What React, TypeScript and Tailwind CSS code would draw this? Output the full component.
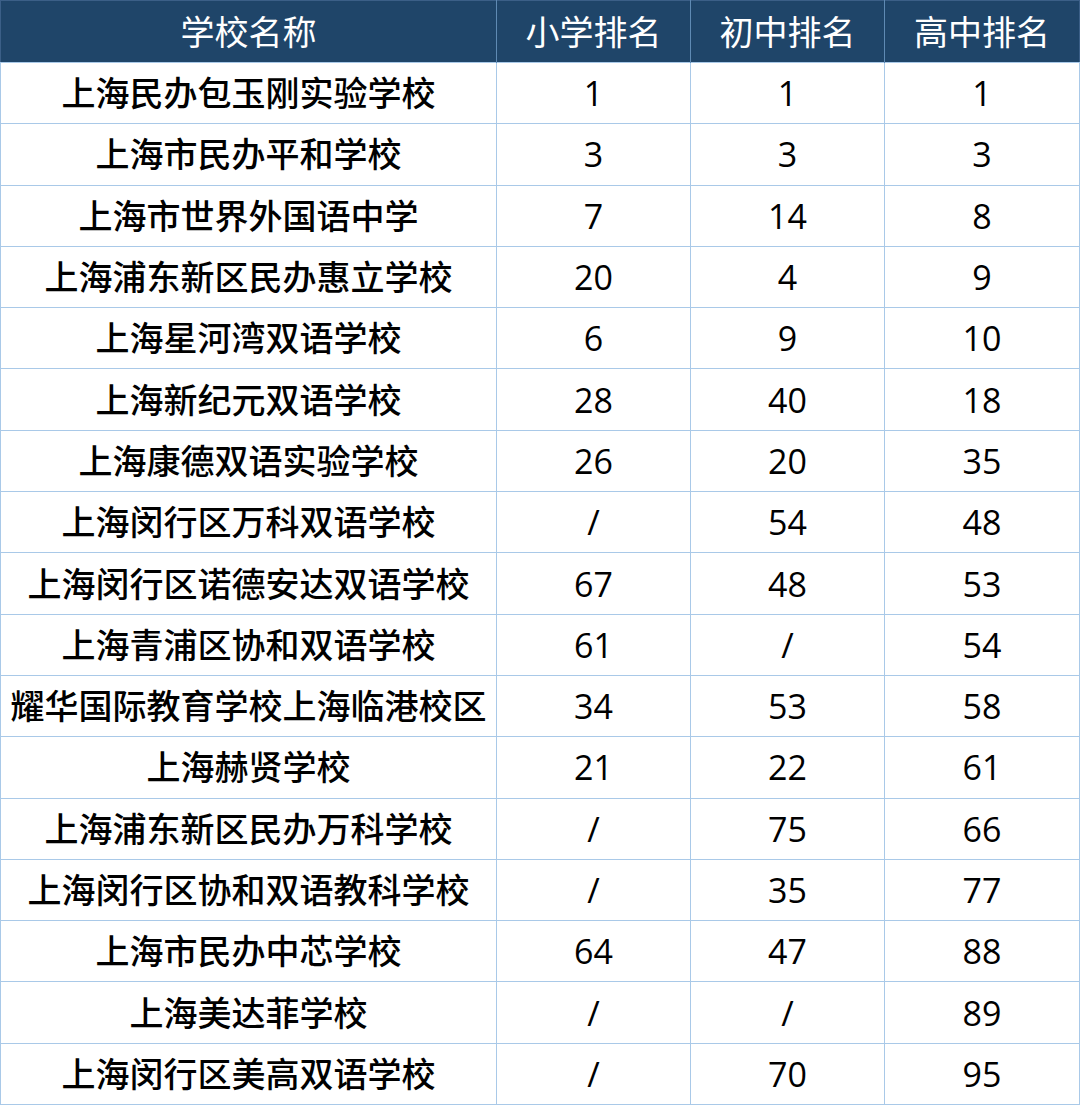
const rows: [string, string, string, string][] = [
  ['上海民办包玉刚实验学校', '1', '1', '1'],
  ['上海市民办平和学校', '3', '3', '3'],
  ['上海市世界外国语中学', '7', '14', '8'],
  ['上海浦东新区民办惠立学校', '20', '4', '9'],
  ['上海星河湾双语学校', '6', '9', '10'],
  ['上海新纪元双语学校', '28', '40', '18'],
  ['上海康德双语实验学校', '26', '20', '35'],
  ['上海闵行区万科双语学校', '/', '54', '48'],
  ['上海闵行区诺德安达双语学校', '67', '48', '53'],
  ['上海青浦区协和双语学校', '61', '/', '54'],
  ['耀华国际教育学校上海临港校区', '34', '53', '58'],
  ['上海赫贤学校', '21', '22', '61'],
  ['上海浦东新区民办万科学校', '/', '75', '66'],
  ['上海闵行区协和双语教科学校', '/', '35', '77'],
  ['上海市民办中芯学校', '64', '47', '88'],
  ['上海美达菲学校', '/', '/', '89'],
  ['上海闵行区美高双语学校', '/', '70', '95'],
];

const headers = ['学校名称', '小学排名', '初中排名', '高中排名'];

export default function App() {
  return (
    <div className="w-[1080px] h-[1107px] bg-white font-['Open_Sans','Noto_Sans_CJK_SC',sans-serif]">
      <table className="w-[1079px] table-fixed border-collapse border border-[#3b5f87] text-[34px] leading-none">
        <colgroup>
          <col className="w-[496px]" />
          <col className="w-[194px]" />
          <col className="w-[194px]" />
          <col className="w-[195px]" />
        </colgroup>
        <thead>
          <tr className="h-[62px] bg-[#1f4569] text-white">
            {headers.map((h, i) => (
              <th
                key={h}
                className={
                  'p-0 font-normal text-center align-middle ' +
                  (i > 0 ? 'border-l border-[#5f8ab3]' : '')
                }
              >
                {h}
              </th>
            ))}
          </tr>
        </thead>
        <tbody className="text-black font-medium">
          {rows.map((r) => (
            <tr key={r[0]} className="h-[61.3px]">
              {r.map((cell, i) => (
                <td
                  key={i}
                  className="p-0 text-center align-middle border border-[#a9c9e8] whitespace-nowrap"
                >
                  {cell}
                </td>
              ))}
            </tr>
          ))}
        </tbody>
      </table>
    </div>
  );
}
